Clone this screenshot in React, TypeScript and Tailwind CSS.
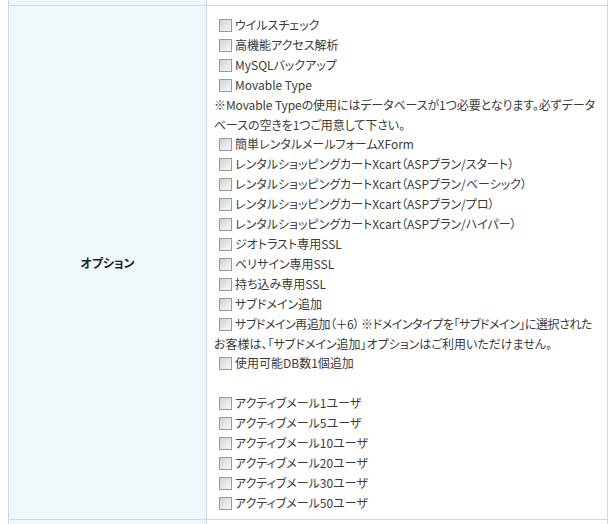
const options1 = ["ウイルスチェック", "高機能アクセス解析", "MySQLバックアップ", "Movable Type"];

const options2 = [
  "簡単レンタルメールフォームXForm",
  "レンタルショッピングカートXcart（ASPプラン/スタート）",
  "レンタルショッピングカートXcart（ASPプラン/ベーシック）",
  "レンタルショッピングカートXcart（ASPプラン/プロ）",
  "レンタルショッピングカートXcart（ASPプラン/ハイパー）",
  "ジオトラスト専用SSL",
  "ベリサイン専用SSL",
  "持ち込み専用SSL",
  "サブドメイン追加",
];

const activeMail = [1, 5, 10, 20, 30, 50];

function Box() {
  return (
    <span className="ml-[5px] mr-[3px] inline-block h-[13px] w-[13px] shrink-0 border border-[#9a9a9a] bg-gradient-to-br from-[#cfcfcf] via-[#e6e6e6] to-[#f8f8f8] align-middle" />
  );
}

function Row({ label }: { label: string }) {
  return (
    <div className="flex h-[20px] items-center whitespace-nowrap">
      <Box />
      <span>{label}</span>
    </div>
  );
}

export default function App() {
  return (
    <div
      className="h-[524px] w-[611px] overflow-hidden bg-white text-[12px] text-[#3a3a3a] [font-feature-settings:'palt']"
      style={{ fontFamily: '"Noto Sans CJK JP", "Noto Sans", sans-serif' }}
    >
      <div className="ml-[8px] w-[600px] border-x border-[#c6dfe3]">
        <div className="flex h-[6px] border-b border-[#c6dfe3]">
          <div className="w-[198px] border-r border-[#c6dfe3] bg-[#eef7f9]" />
          <div className="flex-1" />
        </div>

        <div className="flex border-b border-[#c6dfe3]">
          <div className="flex w-[198px] items-center justify-center border-r border-[#c6dfe3] bg-[#eef7f9] font-bold text-[#222]">
            オプション
          </div>
          <div className="flex-1 pb-[6px] pl-[7px] pt-[9px]">
            {options1.map((o) => (
              <Row key={o} label={o} />
            ))}
            <div className="whitespace-nowrap leading-[19.5px] tracking-[-0.1px]">
              ※Movable Typeの使用にはデータベースが1つ必要となります。必ずデータ
              <br />
              ベースの空きを1つご用意して下さい。
            </div>
            {options2.map((o) => (
              <Row key={o} label={o} />
            ))}
            <div className="flex h-[20px] items-center whitespace-nowrap tracking-[-0.45px]">
              <Box />
              <span>サブドメイン再追加（＋6） ※ドメインタイプを「サブドメイン」に選択された</span>
            </div>
            <div className="h-[19px] whitespace-nowrap leading-[19px]">
              お客様は、「サブドメイン追加」オプションはご利用いただけません。
            </div>
            <Row label="使用可能DB数1個追加" />
            <div className="h-[20px]" />
            {activeMail.map((n) => (
              <Row key={n} label={`アクティブメール${n}ユーザ`} />
            ))}
          </div>
        </div>

        <div className="flex h-[10px]">
          <div className="w-[198px] border-r border-[#c6dfe3] bg-[#eef7f9]" />
          <div className="flex-1" />
        </div>
      </div>
    </div>
  );
}
